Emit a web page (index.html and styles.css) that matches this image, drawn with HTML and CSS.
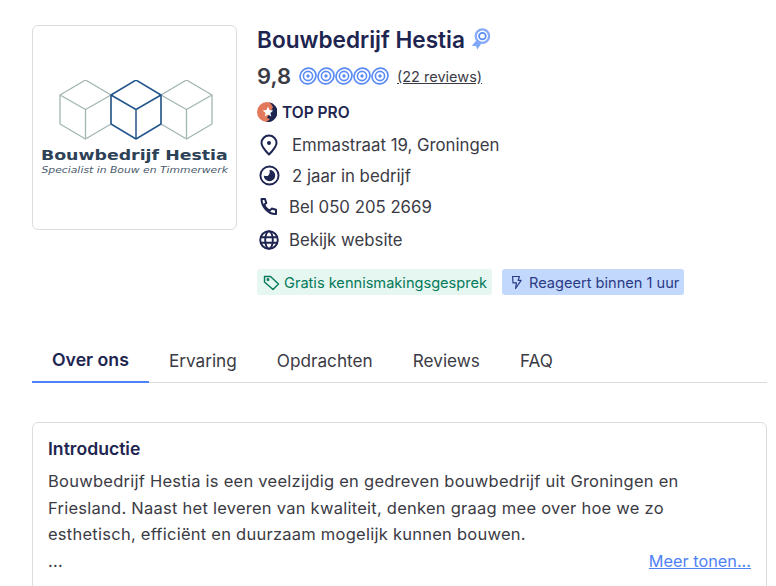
FILE: index.html
```html
<!DOCTYPE html>
<html lang="nl">
<head>
  <meta charset="UTF-8">
  <title>Bouwbedrijf Hestia</title>
  <link rel="stylesheet" href="styles.css">
</head>
<body>
  <div class="container">
    <!-- Kop -->
    <div class="header">
      <div class="logo-box">
        <svg class="cubes" width="156" height="60" viewBox="0 0 156 60" fill="none">
          <g stroke="#a3b5b2" stroke-width="1.3" stroke-linejoin="round">
            <path d="M2 15 27.500 0 53 15V44L27.500 59 2 44Z"/>
            <path d="M2 15 27.500 29.500 53 15M27.500 29.500V59"/>
            <path d="M103 15 128.500 0 154 15V44L128.500 59 103 44Z"/>
            <path d="M103 15 128.500 29.500 154 15M128.500 29.500V59"/>
          </g>
          <g stroke="#24568c" stroke-width="1.5" stroke-linejoin="round">
            <path d="M53 15 78 0 103 15V44L78 59 53 44Z"/>
            <path d="M53 15 78 29.500 103 15M78 29.500V59"/>
          </g>
        </svg>
        <div class="logo-name">Bouwbedrijf Hestia</div>
        <div class="logo-sub">Specialist in Bouw en Timmerwerk</div>
      </div>

      <div class="info">
        <h1 class="title">
          Bouwbedrijf Hestia
          <svg width="21" height="24" viewBox="0 0 22 24" fill="none">
            <path d="M7 13 2 19l4.500.5 1 3.500 5-7Z" fill="#7fa6f8"/>
            <circle cx="13" cy="9" r="7" fill="#fff" stroke="#86aaf8" stroke-width="2.400"/>
            <circle cx="13" cy="9" r="3.500" fill="#fff" stroke="#5b8cf5" stroke-width="1.800"/>
          </svg>
        </h1>

        <div class="rating">
          <span class="score">9,8</span>
          <span class="rings">
            <svg width="18" height="18" viewBox="0 0 18 18" fill="none"><ellipse cx="9" cy="9" rx="8.200" ry="7.600" transform="rotate(-40 9 9)" stroke="#5b8cf5" stroke-width="1.700"/><circle cx="9" cy="9" r="4.600" stroke="#5b8cf5" stroke-width="1.600"/><circle cx="9" cy="9" r="1.700" fill="#5b8cf5"/></svg>
            <svg width="18" height="18" viewBox="0 0 18 18" fill="none"><ellipse cx="9" cy="9" rx="8.200" ry="7.600" transform="rotate(-40 9 9)" stroke="#5b8cf5" stroke-width="1.700"/><circle cx="9" cy="9" r="4.600" stroke="#5b8cf5" stroke-width="1.600"/><circle cx="9" cy="9" r="1.700" fill="#5b8cf5"/></svg>
            <svg width="18" height="18" viewBox="0 0 18 18" fill="none"><ellipse cx="9" cy="9" rx="8.200" ry="7.600" transform="rotate(-40 9 9)" stroke="#5b8cf5" stroke-width="1.700"/><circle cx="9" cy="9" r="4.600" stroke="#5b8cf5" stroke-width="1.600"/><circle cx="9" cy="9" r="1.700" fill="#5b8cf5"/></svg>
            <svg width="18" height="18" viewBox="0 0 18 18" fill="none"><ellipse cx="9" cy="9" rx="8.200" ry="7.600" transform="rotate(-40 9 9)" stroke="#5b8cf5" stroke-width="1.700"/><circle cx="9" cy="9" r="4.600" stroke="#5b8cf5" stroke-width="1.600"/><circle cx="9" cy="9" r="1.700" fill="#5b8cf5"/></svg>
            <svg width="18" height="18" viewBox="0 0 18 18" fill="none"><ellipse cx="9" cy="9" rx="8.200" ry="7.600" transform="rotate(-40 9 9)" stroke="#5b8cf5" stroke-width="1.700"/><circle cx="9" cy="9" r="4.600" stroke="#5b8cf5" stroke-width="1.600"/><circle cx="9" cy="9" r="1.700" fill="#5b8cf5"/></svg>
          </span>
          <a class="reviews" href="#">(22 reviews)</a>
        </div>

        <div class="top-pro">
          <svg width="20" height="20" viewBox="0 0 20 20"><circle cx="10" cy="10" r="10" fill="#e2795a"/><path d="M12 .2A10 10 0 0 1 9 20a10 10 0 0 0 4-3l-3-1 5-9 1-2A10 10 0 0 0 12 .2Z" fill="#1e2550"/><path d="M11 4.500l1.500 3.600 3.800.3-2.900 2.500.9 3.700-3.300-2-3.300 2 .9-3.700-2.900-2.500 3.800-.3Z" fill="#fff"/></svg>
          TOP PRO
        </div>

        <div class="line line-first">
          <svg width="20" height="22" viewBox="0 0 20 22" fill="none" stroke="#1e2550" stroke-width="2"><path d="M10 20.500C5.500 16 2.500 12.500 2.500 9a7.500 7.500 0 0 1 15 0c0 3.500-3 7-7.500 11.500Z" stroke-linejoin="round"/><circle cx="10" cy="9" r="2" fill="#1e2550" stroke="none"/></svg>
          <span>Emmastraat 19, Groningen</span>
        </div>
        <div class="line line-age">
          <svg width="21" height="21" viewBox="0 0 22 22" fill="none"><circle cx="11" cy="11" r="9.500" stroke="#1e2550" stroke-width="2"/><path d="M11 5a6 6 0 1 1-6 6c2 1 4 .8 5.200-.6C11.300 9 11.500 7 11 5Z" fill="#1e2550"/></svg>
          <span>2 jaar in bedrijf</span>
        </div>
        <div class="line">
          <svg width="20" height="20" viewBox="0 0 20 20" fill="none" stroke="#1e2550" stroke-width="2" stroke-linecap="round" stroke-linejoin="round"><path d="M2.500 2h3.500l1.300 4-2 1.500c.8 2.800 3 5 5.800 6l1.600-2 4.300 1.300V17c-7.500.5-14.500-7.500-14.500-15Z"/></svg>
          <span>Bel 050 205 2669</span>
        </div>
        <div class="line line-last">
          <svg width="20" height="20" viewBox="0 0 20 20" fill="none" stroke="#1e2550" stroke-width="1.900"><circle cx="10" cy="10" r="8.800"/><ellipse cx="10" cy="10" rx="3.800" ry="8.800"/><path d="M1.500 7.300h17M1.500 12.700h17"/></svg>
          <span>Bekijk website</span>
        </div>

        <div class="tags">
          <span class="tag tag-green">
            <svg width="17" height="17" viewBox="0 0 17 17" fill="none" stroke="#04795b" stroke-width="1.400" stroke-linejoin="round"><path d="M1.500 2.500h6l8 7.500-5.500 5.500-8.500-7.500Z"/><circle cx="5" cy="5.500" r=".8" fill="#04795b"/></svg>
            Gratis kennismakingsgesprek
          </span>
          <span class="tag tag-blue">
            <svg width="12" height="17" viewBox="0 0 14 17" fill="none" stroke="#2b3a86" stroke-width="1.400" stroke-linejoin="round"><path d="M3 1.500h8L9.500 6H13l-6.500 9.500L7.500 9H3.500Z"/></svg>
            Reageert binnen 1 uur
          </span>
        </div>
      </div>
    </div>

    <!-- Tabs -->
    <div class="tabs">
      <a class="tab active" href="#">Over ons</a>
      <a class="tab" href="#">Ervaring</a>
      <a class="tab" href="#">Opdrachten</a>
      <a class="tab" href="#">Reviews</a>
      <a class="tab" href="#">FAQ</a>
    </div>

    <!-- Introductie -->
    <div class="card">
      <h2>Introductie</h2>
      <p>Bouwbedrijf Hestia is een veelzijdig en gedreven bouwbedrijf uit Groningen en Friesland. Naast het leveren van kwaliteit, denken graag mee over hoe we zo esthetisch, efficiënt en duurzaam mogelijk kunnen bouwen.</p>
      <div class="card-end">
        <span>...</span>
        <a class="more" href="#">Meer tonen...</a>
      </div>
    </div>
  </div>
</body>
</html>
```

FILE: styles.css
```css
html, body {
  height: 100%;
  overflow: hidden;
}
body {
  margin: 0;
  background: white;
  color: #3b3b45;
  font-family: "Inter", "Liberation Sans", sans-serif;
  font-size: 16px;
}
.container {
  padding: 25px 9px 0 32px;
}
.header {
  display: flex;
  gap: 20px;
  height: 294px;
}
.logo-box {
  width: 203px;
  height: 203px;
  border: 1px solid #dcdcdc;
  border-radius: 6px;
  display: flex;
  flex-direction: column;
  align-items: center;
}
.cubes {
  margin: 54px 0 0 2px;
}
.logo-name {
  margin-top: 7px;
  font-family: "DejaVu Sans", sans-serif;
  font-weight: bold;
  font-size: 14px;
  color: #2e4257;
  white-space: nowrap;
  transform: scaleX(1.24);
}
.logo-sub {
  margin-top: 2px;
  font-family: "DejaVu Sans", sans-serif;
  font-style: italic;
  font-size: 9px;
  color: #4a5a6c;
  white-space: nowrap;
  transform: scaleX(1.2);
}
.info {
  flex: 1;
}
.title {
  display: flex;
  align-items: center;
  gap: 5px;
  margin: 0;
  height: 28px;
  font-size: 22.600px;
  font-weight: 600;
  color: #1e2550;
}
.rating {
  display: flex;
  align-items: center;
  margin-top: 9px;
  height: 28px;
}
.score {
  font-size: 22px;
  font-weight: 600;
  color: #3b3b45;
  margin-right: 8px;
}
.rings {
  display: flex;
  margin-right: 8px;
}
.reviews {
  color: #3b3b45;
  font-size: 14.500px;
}
.top-pro {
  display: flex;
  align-items: center;
  gap: 5px;
  margin-top: 11px;
  height: 22px;
  font-size: 15.500px;
  font-weight: 600;
  color: #1e2550;
}
.line {
  display: flex;
  align-items: center;
  gap: 10px;
  height: 31px;
  padding-left: 2px;
  font-size: 16.800px;
}
.line-first {
  gap: 13px;
  margin-top: 6px;
}
.line-age {
  gap: 12px;
}
.line-last {
  margin-top: 2px;
}
.tags {
  display: flex;
  gap: 10px;
  margin-top: 14px;
}
.tag {
  display: flex;
  align-items: center;
  height: 25px;
  border-radius: 3px;
  font-size: 14.600px;
}
.tag-green {
  gap: 4px;
  padding: 1px 5px 0 6px;
  background: #e6f6f0;
  color: #04795b;
}
.tag-blue {
  gap: 7px;
  padding: 1px 5px 0 8px;
  background: #c2d9fd;
  color: #2b3a86;
}
.tabs {
  display: flex;
  border-bottom: 1px solid #dcdcdc;
  height: 64px;
  box-sizing: border-box;
}
.tab {
  display: flex;
  align-items: center;
  padding: 18px 20px 0;
  margin-bottom: -1px;
  color: #3b3b45;
  text-decoration: none;
  font-size: 17.200px;
}
.tab.active {
  font-weight: 600;
  font-size: 17.700px;
  color: #1e2550;
  border-bottom: 2px solid #4f82f7;
}
.card {
  margin-top: 39px;
  padding: 15px 15px 0;
  border: 1px solid #dcdcdc;
  border-radius: 6px;
  height: 200px;
  font-size: 16.500px;
  letter-spacing: .25px;
}
.card h2 {
  margin: 0;
  font-size: 17.600px;
  font-weight: 600;
  letter-spacing: 0;
  color: #1e2550;
  line-height: 22px;
}
.card p {
  margin: 8px 0 0;
  max-width: 680px;
  line-height: 26.500px;
}
.card-end {
  display: flex;
  justify-content: space-between;
  line-height: 26.500px;
}
.more {
  color: #4f82f7;
  letter-spacing: 0;
  font-size: 16.300px;
}
```
